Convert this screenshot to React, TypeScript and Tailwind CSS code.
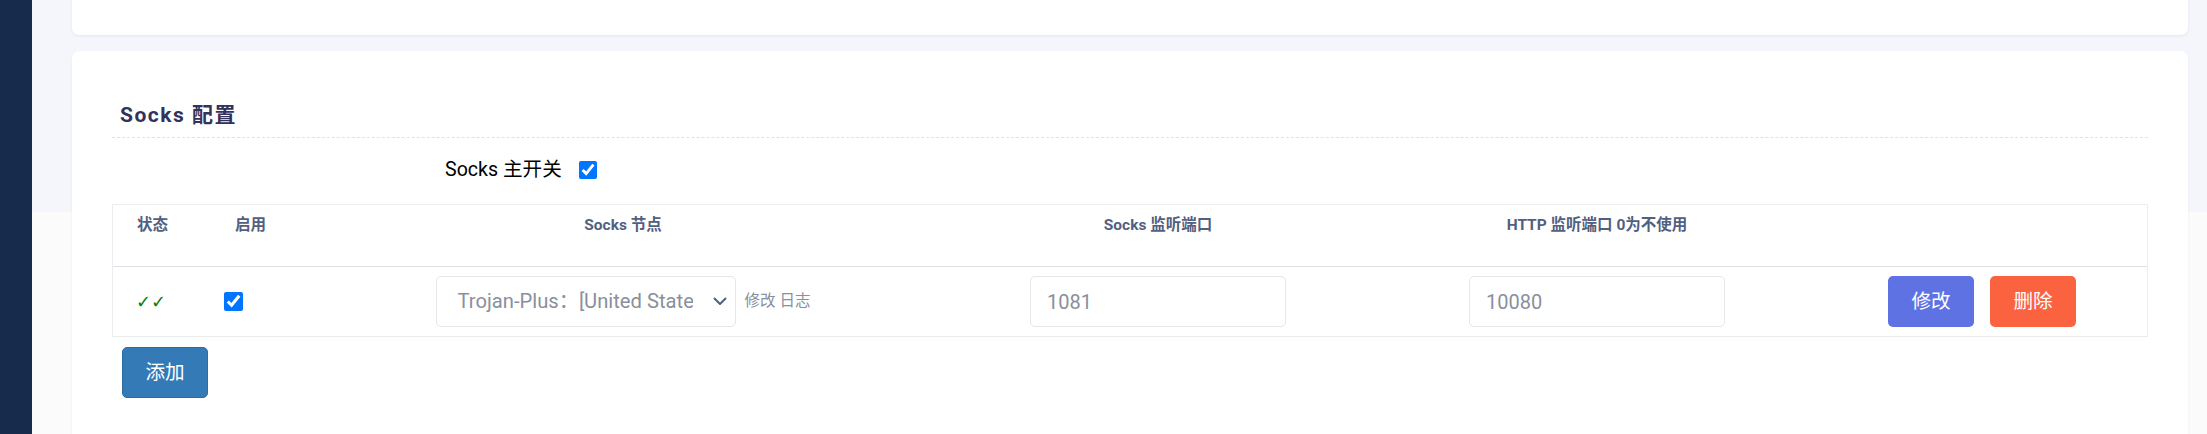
import React from "react";

const font = { fontFamily: 'Roboto, "Noto Sans CJK SC", sans-serif' };

function Chevron() {
  return (
    <svg width="14" height="9" viewBox="0 0 14 9" fill="none">
      <path d="M1.5 1.5 L7 7 L12.5 1.5" stroke="#525f7f" strokeWidth="2" strokeLinecap="round" strokeLinejoin="round" />
    </svg>
  );
}

export default function App() {
  return (
    <div
      className="flex h-[434px] w-[2207px] overflow-hidden font-['Roboto','Noto_Sans_CJK_SC',sans-serif]"
      style={font}
    >
      <div className="w-[32px] shrink-0 bg-[#172b4d]" />
      <div className="flex-1 pl-[40px] pr-[19px] bg-[linear-gradient(to_bottom,#f5f6fb_0,#f5f6fb_212px,#fbfbfc_212px)]">
        {/* top card */}
        <div className="h-[35px] rounded-b-[7px] bg-white shadow-[0_1px_3px_rgba(50,50,93,0.08)]" />
        {/* second card */}
        <div className="mt-[16px] h-[500px] rounded-[7px] bg-white px-[40px] pt-[49px] shadow-[0_1px_3px_rgba(50,50,93,0.06)]">
          <div className="border-b border-dashed border-[#dfe2e7] px-[8px] pb-[7px]">
            <h3 className="text-[21px] font-bold leading-[30px] tracking-[1.5px] text-[#32325d]">Socks 配置</h3>
          </div>
          <div className="mt-[18px] flex h-[28px] items-center pl-[333px]">
            <span className="text-[19.6px] leading-[28px] text-black">Socks 主开关</span>
            <input type="checkbox" defaultChecked className="ml-[17px] h-[18px] w-[18px]" />
          </div>
          <div className="mt-[20px] border border-b-0 border-[#ebedf0]">
            {/* header */}
            <div className="flex h-[62px] items-start border-b border-[#dee2e6] pt-[9px] text-[15.5px] font-bold leading-[22px] text-[#525f7f]">
              <div className="w-[87px] shrink-0 pl-[24px]">状态</div>
              <div className="w-[100px] shrink-0 pl-[35px]">启用</div>
              <div className="w-[646px] shrink-0 text-center">Socks 节点</div>
              <div className="w-[424px] shrink-0 text-center">Socks 监听端口</div>
              <div className="w-[454px] shrink-0 text-center">HTTP 监听端口 0为不使用</div>
              <div className="flex-1" />
            </div>
            {/* row */}
            <div className="flex h-[70px] items-center border-b border-[#e9ecef]">
              <div className="w-[87px] shrink-0 pl-[23px] font-['DejaVu_Sans',sans-serif] text-[18px] font-bold leading-[20px] text-[#0a7d0a]">✓✓</div>
              <div className="flex w-[100px] shrink-0 items-center pl-[24px]">
                <input type="checkbox" defaultChecked className="h-[19px] w-[19px]" />
              </div>
              <div className="flex w-[646px] shrink-0 items-center justify-center">
                <div className="relative flex h-[51px] w-[300px] items-center rounded-[5px] border border-[#e3e7eb] bg-white">
                  <div className="w-[256px] overflow-hidden whitespace-nowrap pl-[21px] text-[20.2px] text-[#8a8f9c]">
                    Trojan-Plus：[United States] 1
                  </div>
                  <div className="absolute right-[8px] top-[20px]">
                    <Chevron />
                  </div>
                </div>
                <span className="ml-[9px] whitespace-nowrap text-[15.5px] text-[#8a8f9c]">修改 日志</span>
              </div>
              <div className="flex w-[424px] shrink-0 justify-center">
                <div className="flex h-[51px] w-[256px] items-center rounded-[5px] border border-[#e3e7eb] bg-white pl-[16px] text-[20px] text-[#8a8f9c]">
                  1081
                </div>
              </div>
              <div className="flex w-[454px] shrink-0 justify-center">
                <div className="flex h-[51px] w-[256px] items-center rounded-[5px] border border-[#e3e7eb] bg-white pl-[16px] text-[20px] text-[#8a8f9c]">
                  10080
                </div>
              </div>
              <div className="flex flex-1 items-center gap-[16px] pl-[64px]">
                <button className="h-[51px] w-[86px] rounded-[5px] bg-[#5e72e4] text-[19.6px] text-white">修改</button>
                <button className="h-[51px] w-[86px] rounded-[5px] bg-[#fb6340] text-[19.6px] text-white">删除</button>
              </div>
            </div>
          </div>
          <button className="ml-[10px] mt-[10px] h-[51px] w-[86px] rounded-[5px] border border-[#2e6da4] bg-[#337ab7] text-[19.6px] text-white">
            添加
          </button>
        </div>
      </div>
    </div>
  );
}
